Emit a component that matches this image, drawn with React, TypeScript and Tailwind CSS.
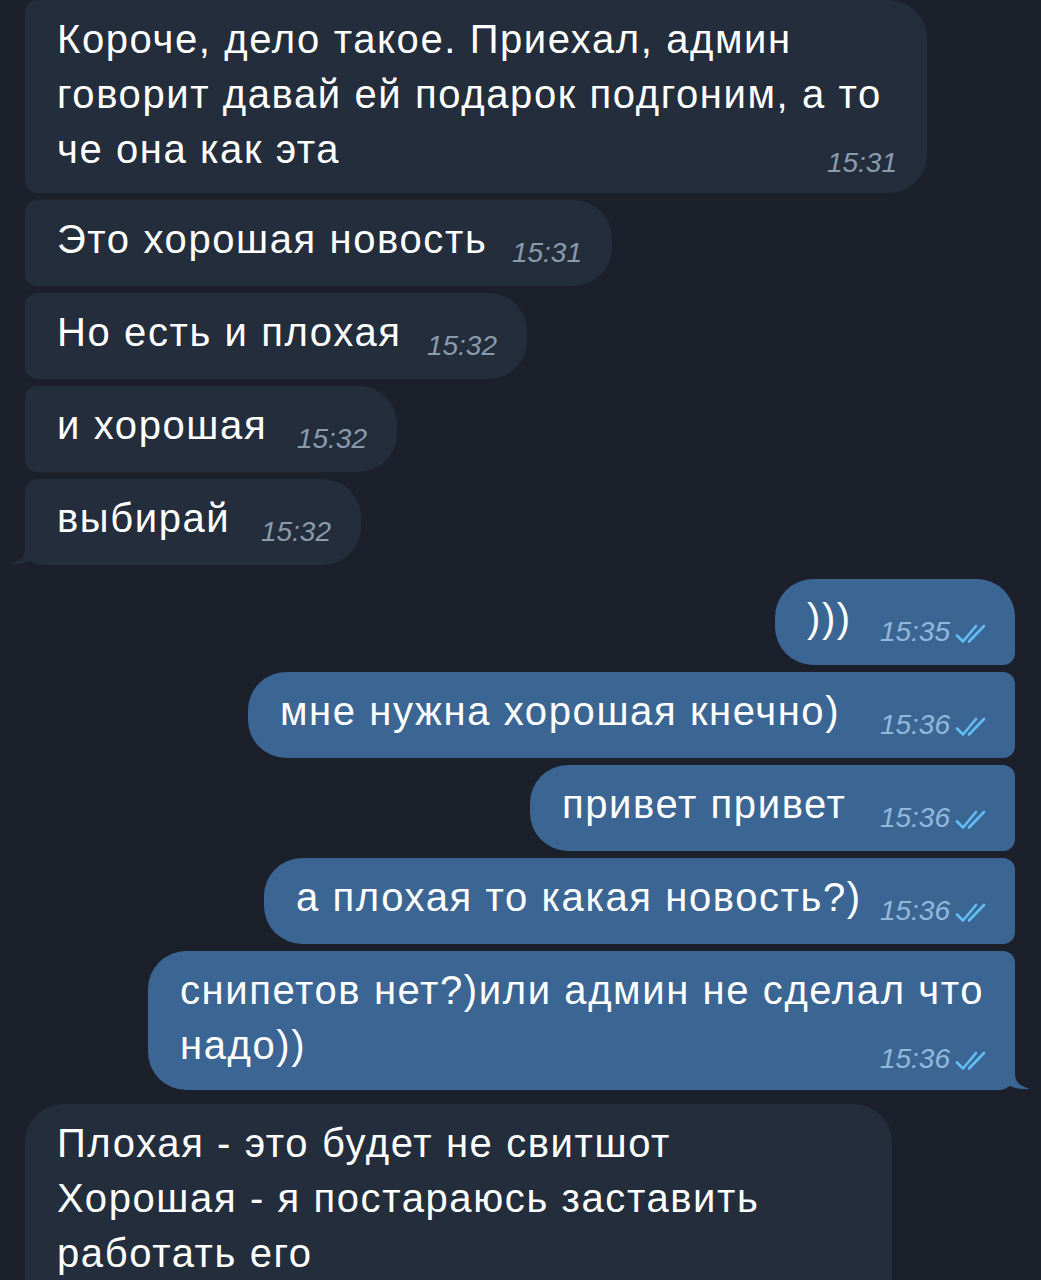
import React from "react";

type Msg = {
  out: boolean;
  lines: string[];
  time?: string;
  width: number;
  radius: string;
  tail?: boolean;
  extra?: string;
};

const Checks = () => (
  <svg width="35" height="21" viewBox="0 0 35 21" className="inline-block ml-[5px]" fill="none">
    <path d="M2 12.5 L8 18.5 L21 3" stroke="#62bdf4" strokeWidth="2.6" strokeLinecap="round" strokeLinejoin="round" />
    <path d="M14 18.5 L29 3" stroke="#62bdf4" strokeWidth="2.6" strokeLinecap="round" />
  </svg>
);

const TailIn = ({ color }: { color: string }) => (
  <svg width="40" height="30" viewBox="0 0 40 30" className="absolute left-[-16px] bottom-0">
    <path d="M16 0 L16 14 C16 21 12 26 1 28.5 C9 29.8 16 28.5 22 25.5 C27 28.5 33 30 40 30 L40 0 Z" fill={color} />
  </svg>
);

const TailOut = ({ color }: { color: string }) => (
  <svg width="40" height="30" viewBox="0 0 40 30" className="absolute right-[-16px] bottom-0">
    <g transform="translate(40 0) scale(-1 1)">
      <path d="M16 0 L16 14 C16 21 12 26 1 28.5 C9 29.8 16 28.5 22 25.5 C27 28.5 33 30 40 30 L40 0 Z" fill={color} />
    </g>
  </svg>
);

const IN_BG = "#232d3b";
const OUT_BG = "#3b6694";

const Bubble = ({ m }: { m: Msg }) => {
  const last = m.lines[m.lines.length - 1];
  const rest = m.lines.slice(0, -1);
  return (
    <div
      className={`relative shrink-0 pl-8 pt-[12px] text-white text-[40px] leading-[55px] tracking-[1.6px] ${
        m.out ? "self-end bg-[#3b6694] pr-[25px]" : "self-start bg-[#232d3b] pr-[30px]"
      } ${m.radius} ${m.extra ?? "pb-[19px]"}`}
      style={{ width: m.width }}
    >
      {rest.map((l, i) => (
        <div key={i} className="whitespace-nowrap">
          {l}
        </div>
      ))}
      <div className="flex items-baseline justify-between">
        <span className="whitespace-nowrap">{last}</span>
        {m.time && (
          <span
            className={`relative top-[9px] italic text-[28px] leading-none tracking-normal whitespace-nowrap ${
              m.out ? "text-[#94b8dc]" : "text-[#8a9bad]"
            }`}
          >
            {m.time}
            {m.out && <Checks />}
          </span>
        )}
      </div>
      {m.tail && (m.out ? <TailOut color={OUT_BG} /> : <TailIn color={IN_BG} />)}
    </div>
  );
};

const group1: Msg[] = [
  {
    out: false,
    lines: ["Короче, дело такое. Приехал, админ", "говорит давай ей подарок подгоним, а то", "че она как эта"],
    time: "15:31",
    width: 902,
    radius: "rounded-l-[12px] rounded-r-[38px]",
    extra: "pb-[16px]",
  },
  { out: false, lines: ["Это хорошая новость"], time: "15:31", width: 587, radius: "rounded-l-[12px] rounded-r-[38px]" },
  { out: false, lines: ["Но есть и плохая"], time: "15:32", width: 502, radius: "rounded-l-[12px] rounded-r-[38px]" },
  { out: false, lines: ["и хорошая"], time: "15:32", width: 372, radius: "rounded-l-[12px] rounded-r-[38px]" },
  {
    out: false,
    lines: ["выбирай"],
    time: "15:32",
    width: 336,
    radius: "rounded-tl-[12px] rounded-bl-[16px] rounded-r-[38px]",
    tail: true,
  },
];

const group2: Msg[] = [
  { out: true, lines: [")))"], time: "15:35", width: 240, radius: "rounded-l-[38px] rounded-tr-[38px] rounded-br-[12px]" },
  { out: true, lines: ["мне нужна хорошая кнечно)"], time: "15:36", width: 767, radius: "rounded-l-[38px] rounded-r-[12px]" },
  { out: true, lines: ["привет привет"], time: "15:36", width: 485, radius: "rounded-l-[38px] rounded-r-[12px]" },
  { out: true, lines: ["а плохая то какая новость?)"], time: "15:36", width: 751, radius: "rounded-l-[38px] rounded-r-[12px]" },
  {
    out: true,
    lines: ["снипетов нет?)или админ не сделал что", "надо))"],
    time: "15:36",
    width: 867,
    radius: "rounded-l-[38px] rounded-tr-[12px] rounded-br-[16px]",
    tail: true,
    extra: "pb-[17px]",
  },
];

const group3: Msg[] = [
  {
    out: false,
    lines: ["Плохая - это будет не свитшот", "Хорошая - я постараюсь заставить", "работать его"],
    width: 867,
    radius: "rounded-tl-[38px] rounded-bl-[12px] rounded-r-[38px]",
    extra: "pb-[60px]",
  },
];

export default function App() {
  return (
    <div className="w-[1041px] h-[1280px] overflow-hidden bg-[#1b202b] font-['Liberation_Sans',Arial,sans-serif] pl-[25px] pr-[26px] flex flex-col">
      <div className="flex flex-col gap-[7px]">
        {group1.map((m, i) => (
          <Bubble key={i} m={m} />
        ))}
      </div>
      <div className="flex flex-col gap-[7px] mt-[14px]">
        {group2.map((m, i) => (
          <Bubble key={i} m={m} />
        ))}
      </div>
      <div className="flex flex-col gap-[7px] mt-[14px]">
        {group3.map((m, i) => (
          <Bubble key={i} m={m} />
        ))}
      </div>
    </div>
  );
}
